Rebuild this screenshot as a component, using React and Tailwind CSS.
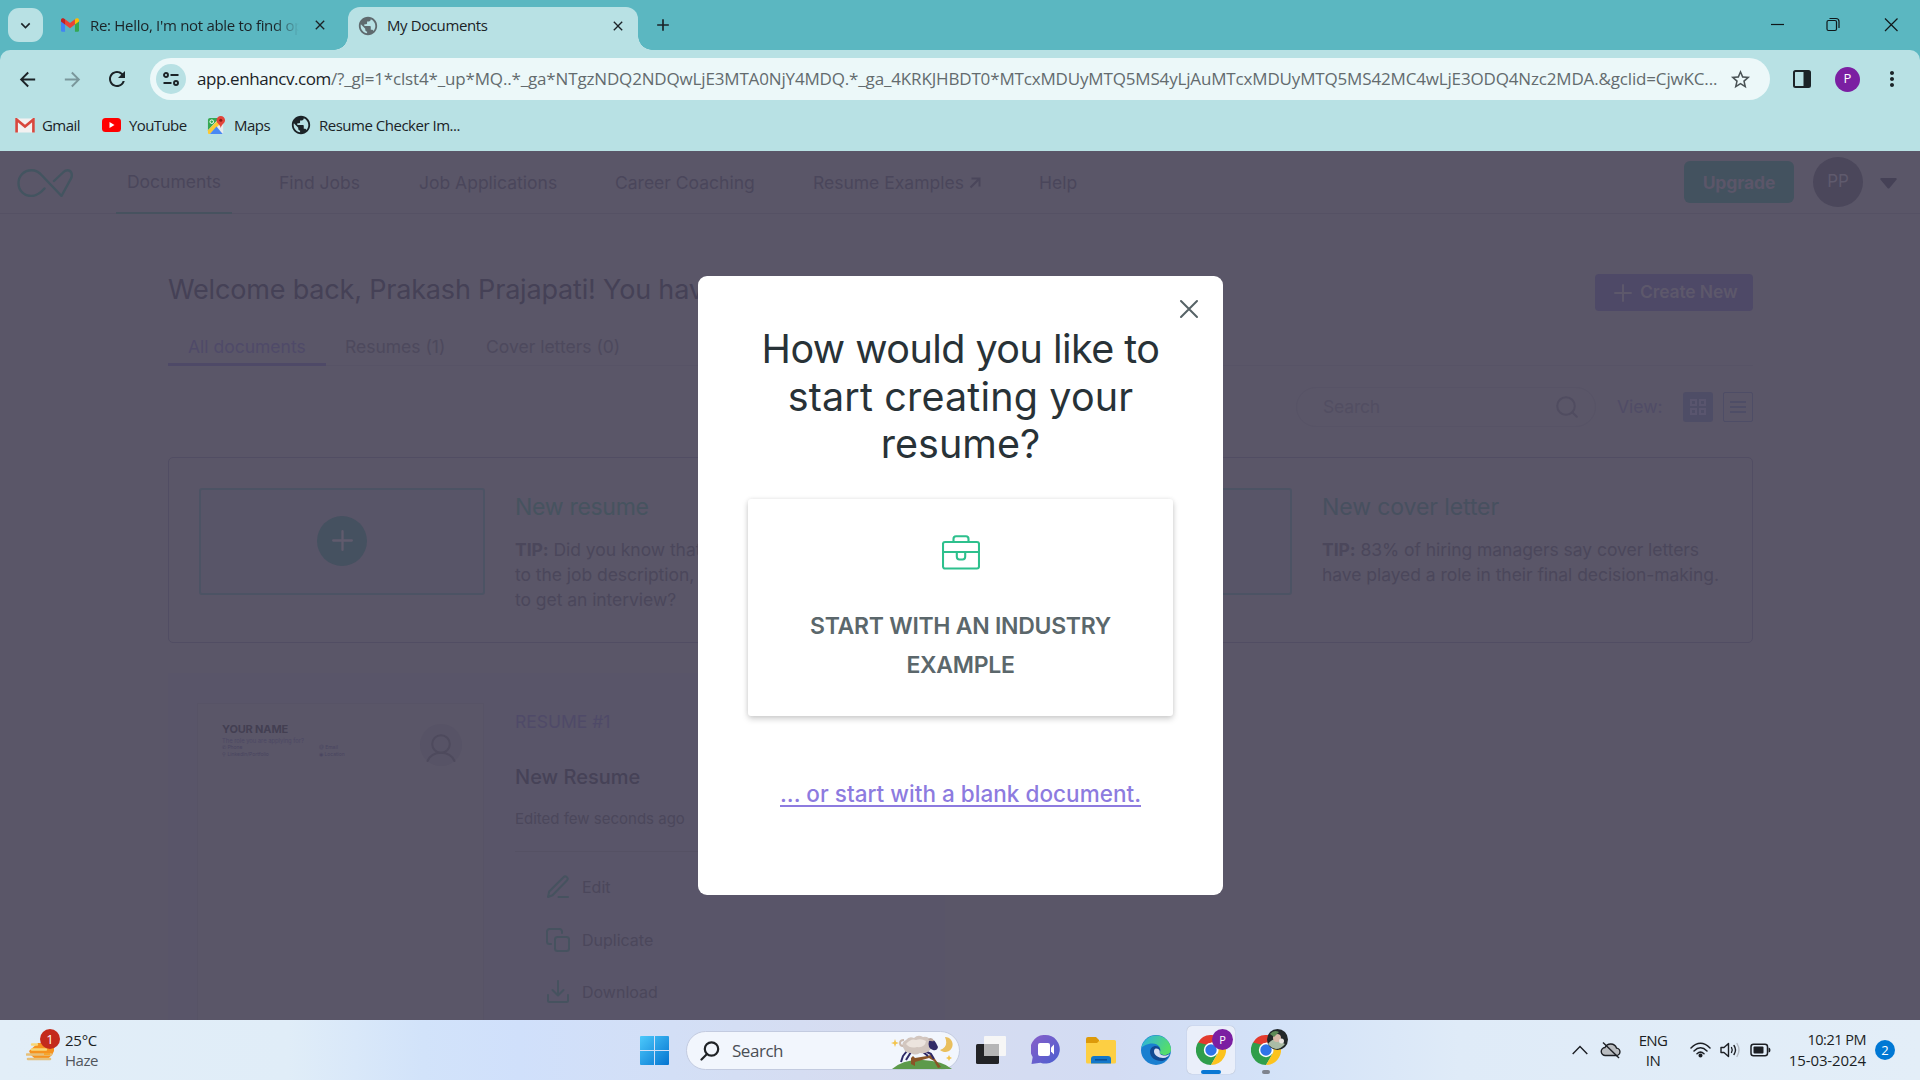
import React from 'react';
import { MdPublic, MdArrowBack, MdArrowForward, MdRefresh, MdStarBorder, MdMoreVert, MdClose, MdAdd, MdExpandMore } from 'react-icons/md';

const GmailIcon = ({ muted, className }) => (
  <svg viewBox="0 0 20 15" className={className}>
    {muted ? (
      <>
        <rect x="1" y="0.5" width="18" height="14" rx="1" fill="#f3f1f1" />
        <path d="M1.6 14.5V1.5L10 8.6l8.4-7.1v13" fill="none" stroke="#d9473d" strokeWidth="2.6" />
      </>
    ) : (
      <>
        <path d="M0 2.5V13.5A1.5 1.5 0 0 0 1.5 15H4.5V5z" fill="#4285f4" />
        <path d="M15.5 15h3a1.5 1.5 0 0 0 1.5-1.5V2.5L15.5 5z" fill="#34a853" />
        <path d="M15.5 1.2V7L20 3.6V2c0-2-2.2-2.6-3.6-1.5z" fill="#fbbc04" />
        <path d="M4.5 7V1.2L10 5.4l5.5-4.2V7L10 11.200z" fill="#ea4335" />
        <path d="M0 2v1.600L4.500 7V1.200L3.600.5C2.200-.6 0 0 0 2z" fill="#c5221f" />
      </>
    )}
  </svg>
);

const MapsIcon = () => (
  <svg viewBox="0 0 20 20" className="h-[19px] w-[19px]">
    <rect x="1" y="2" width="16" height="17" rx="2" fill="#e8eaed" />
    <path d="M1 4a2 2 0 0 1 2-2h10L1 15z" fill="#34a853" />
    <path d="M1 15L12 4l3 3L3 19H2a1 1 0 0 1-1-1z" fill="#fbc934" />
    <path d="M3 19l7-8 6.500 8z" fill="#4a89f3" />
    <circle cx="5" cy="6" r="1.900" fill="none" stroke="#fff" strokeWidth="1" />
    <path d="M14.500 0a4.500 4.500 0 0 0-4.500 4.500c0 3.200 3.500 4 4.500 8 1-4 4.500-4.800 4.500-8A4.500 4.500 0 0 0 14.500 0z" fill="#e2453a" />
    <circle cx="14.500" cy="4.500" r="1.600" fill="#8c1d16" />
  </svg>
);

const Logo = () => (
  <svg viewBox="0 0 56 28" className="h-[28px] w-[56px]" fill="none" stroke="#435460" strokeWidth="2.400" strokeLinejoin="round" strokeLinecap="round">
    <path d="M27.500 19.500C23 24.500 19.500 27 14.500 27 7 27 1.500 21.500 1.500 14.200S7 1.300 14.500 1.300c5 0 8 2.200 10.500 5.200L44.500 27 54 9.500C56 5 54 1.300 50.500 1.300c-2 0-3.500 1-5 2.700L37 12" />
  </svg>
);

const ChromeIcon = () => (
  <svg viewBox="0 0 30 30" className="h-[30px] w-[30px]">
    <path d="M15 15L2 7.500A15 15 0 0 1 28 7.500H15z" fill="#e33b2e" />
    <path d="M2 7.500A15 15 0 0 0 15 30l6.500-11.200L15 15z" fill="#2f9e4b" />
    <path d="M28 7.500A15 15 0 0 1 15 30l6.500-11.200A7.500 7.500 0 0 0 15 7.500z" fill="#fcc31e" />
    <path d="M2 7.500l6.500 11.300L12 10z" fill="#2f9e4b" />
    <circle cx="15" cy="15" r="7.200" fill="#fff" />
    <circle cx="15" cy="15" r="5.700" fill="#2f74e8" />
  </svg>
);

function TabStrip() {
  return (
    <div className="flex h-[50px] bg-[#5bb7c1] pl-2 text-[15px] text-[#1b2327]">
      <div className="mt-2 flex h-[34px] w-[35px] items-center justify-center rounded-[11px] bg-[#b8e1e4]">
        <MdExpandMore className="h-[19px] w-[19px]" />
      </div>
      <div className="flex w-[305px] items-center pl-[18px]">
        <GmailIcon className="h-[14px] w-[18px]" />
        <div className="ml-[11px] w-[209px] overflow-hidden whitespace-nowrap tracking-[-0.3px] [mask-image:linear-gradient(90deg,#000_88%,transparent)]">Re: Hello, I'm not able to find op</div>
        <MdClose className="ml-[13px] h-[16px] w-[16px]" />
      </div>
      <div className="relative mt-[7px] flex h-[43px] w-[290px] items-center rounded-t-[12px] bg-[#b8e1e4] pb-[6px]">
        <div className="absolute bottom-0 left-[-14px] h-[14px] w-[14px] bg-[radial-gradient(circle_at_0_0,transparent_13.5px,#b8e1e4_14px)]" />
        <div className="absolute right-[-14px] bottom-0 h-[14px] w-[14px] bg-[radial-gradient(circle_at_100%_0,transparent_13.5px,#b8e1e4_14px)]" />
        <MdPublic className="ml-[9px] h-[22px] w-[22px] text-[#5f6a6e]" />
        <span className="ml-[8px] w-[223px] tracking-[-0.4px]">My Documents</span>
        <MdClose className="h-[16px] w-[16px]" />
      </div>
      <MdAdd className="mt-[15px] ml-[15px] h-[20px] w-[20px]" />
      <svg viewBox="0 0 132 18" className="mt-[16px] mr-[22px] ml-auto h-[18px] w-[132px]" fill="none" stroke="#10181a" strokeWidth="1.200">
        <path d="M5 8.500h13" />
        <rect x="61" y="4.500" width="9.500" height="10" rx="1.500" />
        <path d="M63.500 2.500h6.500q3 0 3 3v6.500" />
        <path d="M119 2.500l12.500 12.500M131.500 2.500L119 15" />
      </svg>
    </div>
  );
}

function Toolbar() {
  return (
    <div className="bg-[#5bb7c1]">
      <div className="flex h-[58px] items-center rounded-t-[10px] bg-[#b8e1e4] pl-[16px] text-[#1b2327]">
        <MdArrowBack className="h-[23px] w-[23px]" />
        <MdArrowForward className="ml-[22px] h-[23px] w-[23px] text-[#7a979b]" />
        <MdRefresh className="ml-[21px] h-[24px] w-[24px]" />
        <div className="ml-[21px] flex h-[42px] w-[1620px] items-center rounded-full bg-[#ecf8f9] pl-[6px]">
          <div className="flex h-[30px] w-[30px] items-center justify-center rounded-full bg-[#b8e1e4]">
            <svg viewBox="0 0 16 14" className="h-[14px] w-[16px]" fill="none" stroke="#1b2327" strokeWidth="1.900">
              <circle cx="3" cy="3" r="2" /><path d="M7.500 3H15.500M.5 11H8.500" /><circle cx="13" cy="11" r="2" />
            </svg>
          </div>
          <div className="ml-[11px] w-[1532px] text-[17px] whitespace-nowrap">
            <span className="tracking-[-0.42px]">app.enhancv.com</span>
            <span className="tracking-[-0.16px] text-[#636b6e]">/?_gl=1*clst4*_up*MQ..*_ga*NTgzNDQ2NDQwLjE3MTA0NjY4MDQ.*_ga_4KRKJHBDT0*MTcxMDUyMTQ5MS4yLjAuMTcxMDUyMTQ5MS42MC4wLjE3ODQ4Nzc2MDA.&amp;gclid=CjwKC...</span>
          </div>
          <MdStarBorder className="h-[23px] w-[23px] text-[#4a5356]" />
        </div>
        <svg viewBox="0 0 18 18" className="ml-[23px] h-[18px] w-[18px]">
          <rect x="1" y="1" width="16" height="16" rx="1.500" fill="none" stroke="#1b2327" strokeWidth="2" />
          <path d="M10.500 1H17V17H10.500z" fill="#1b2327" />
        </svg>
        <div className="ml-[24px] flex h-[25px] w-[25px] items-center justify-center rounded-full bg-[#7b1fa2] text-[13px] text-white">P</div>
        <MdMoreVert className="ml-[20px] h-[24px] w-[24px]" />
      </div>
    </div>
  );
}

function Bookmarks() {
  return (
    <div className="flex h-[43px] items-start bg-[#b8e1e4] pl-[15px] text-[15px] leading-[20px] whitespace-nowrap text-[#1b2327]">
      <div className="mt-[7px] flex h-[20px] items-center">
        <GmailIcon muted className="h-[15px] w-[20px]" />
        <span className="ml-[7px] w-[60px] tracking-[-0.54px]">Gmail</span>
        <svg viewBox="0 0 19 14" className="h-[14px] w-[19px]"><rect width="19" height="14" rx="3.500" fill="#f00" /><path d="M7.500 4v6l5-3z" fill="#fff" /></svg>
        <span className="ml-[8px] w-[78px] tracking-[-0.6px]">YouTube</span>
        <MapsIcon />
        <span className="ml-[8px] w-[56px] tracking-[-0.54px]">Maps</span>
        <MdPublic className="h-[22px] w-[22px]" />
        <span className="ml-[7px] tracking-[-0.49px]">Resume Checker Im...</span>
      </div>
    </div>
  );
}

function NavBar() {
  return (
    <div className="flex h-[63px] border-b border-[#555164] pl-[17px] text-[17.5px] whitespace-nowrap text-[#4a465b]">
      <div className="mt-[18px]"><Logo /></div>
      <div className="ml-[43px] flex h-[63px] w-[116px] justify-center border-b-2 border-[#47525f] pt-[18px] leading-[26px]">Documents</div>
      <div className="flex h-[63px] pt-[19px] leading-[26px]">
        <span className="ml-[47px] w-[140px]">Find Jobs</span>
        <span className="w-[196px]">Job Applications</span>
        <span className="w-[198px]">Career Coaching</span>
        <span className="w-[156px]">Resume Examples</span>
        <svg viewBox="0 0 12 12" className="mt-[7px] h-[12px] w-[12px]" fill="none" stroke="#4a465b" strokeWidth="2"><path d="M1.500 10.500L10 2M2.500 1.500H10.500V9.500" /></svg>
        <span className="ml-[58px]">Help</span>
      </div>
      <div className="mt-[10px] ml-auto flex h-[42px] w-[110px] items-center justify-center rounded-[6px] bg-[#43525f] pt-[2px] text-[17.5px] font-bold tracking-[-0.1px] text-[#5b5669]">Upgrade</div>
      <div className="mt-[6px] ml-[19px] flex h-[50px] w-[50px] items-center justify-center rounded-full bg-[#4b475b] text-[17px] text-[#5f5a6d]">PP</div>
      <svg viewBox="0 0 17 11" className="mt-[27px] mr-[23px] ml-[17px] h-[11px] w-[17px]" fill="#454156"><path d="M1.500 0h14q2 .3.700 2L9.500 10q-1 1.200-2 0L.8 2Q-.5.300 1.500 0z" /></svg>
    </div>
  );
}

const Plus = ({ className }) => (
  <svg viewBox="0 0 18 18" className={className} fill="none" stroke="currentColor" strokeWidth="2" strokeLinecap="round"><path d="M9 1V17M1 9H17" /></svg>
);

function NewCard({ title, titleClass, children }) {
  return (
    <div className="flex">
      <div className="mt-[30px] flex h-[107px] w-[286px] items-center justify-center rounded-[3px] border-2 border-[#4c5364] bg-[#585568] pb-[2px]">
        <div className="flex h-[50px] w-[50px] items-center justify-center rounded-full bg-[#455160] text-[#605b6d]"><Plus className="h-[21px] w-[21px]" /></div>
      </div>
      <div className="mt-[34px] ml-[30px] text-[17.5px] leading-[25px] tracking-[-0.05px] whitespace-nowrap">
        <div className={titleClass}>{title}</div>
        <div className="mt-[15px] text-[#4b475b]">{children}</div>
      </div>
    </div>
  );
}

function Welcome() {
  return (
    <div className="ml-[168px] w-[1585px]">
      <div className="flex justify-between pt-[60px]">
        <h1 className="-mt-[2px] text-[27px] leading-[36px] tracking-[-0.18px] text-[#454156]">Welcome back, Prakash Prajapati! You have 1 document</h1>
        <div className="flex h-[37px] w-[158px] items-center rounded-[4px] bg-[#4e4967] pl-[19px] text-[17.5px] font-semibold tracking-[-0.14px] text-[#5d586b]">
          <Plus className="mr-[8px] h-[18px] w-[18px]" />Create New
        </div>
      </div>
      <div className="mt-[20px] flex h-[35px] border-b border-[#575366] pt-[3px] text-[17.5px] leading-[26px] text-[#4d495d]">
        <div className="h-[32px] w-[158px] border-b-[3px] border-[#4e4967] pl-[20px] text-[#4f4a68]">All documents</div>
        <span className="ml-[19px] w-[141px]">Resumes (1)</span>
        <span>Cover letters (0)</span>
      </div>
      <div className="mt-[21px] flex items-center justify-end text-[17.5px] text-[#524e62]">
        <div className="flex h-[40px] w-[300px] items-center justify-between rounded-full border border-[#575366] pr-[17px] pl-[26px]">
          <span className="tracking-[-0.18px]">Search</span>
          <svg viewBox="0 0 22 22" className="h-[22px] w-[22px]" fill="none" stroke="#504c60" strokeWidth="2" strokeLinecap="round"><circle cx="10" cy="10" r="8.800" /><path d="M16.500 16.500l4.300 4.300" /></svg>
        </div>
        <span className="ml-[21px] w-[66px] text-[#504c66]">View:</span>
        <div className="flex h-[30px] w-[30px] items-center justify-center rounded-[3px] bg-[#4e4d66]">
          <svg viewBox="0 0 18 18" className="h-[18px] w-[18px]" fill="none" stroke="#59556e" strokeWidth="2"><rect x="2" y="2" width="5" height="5" /><rect x="11" y="2" width="5" height="5" /><rect x="2" y="11" width="5" height="5" /><rect x="11" y="11" width="5" height="5" /></svg>
        </div>
        <div className="ml-[10px] flex h-[30px] w-[30px] items-center justify-center rounded-[2px] border border-[#4e4d66]">
          <svg viewBox="0 0 16 12" className="h-[12px] w-[16px]" stroke="#4e4d66" strokeWidth="2"><path d="M0 1H16M0 6H16M0 11H16" /></svg>
        </div>
      </div>
      <div className="mt-[30px] grid h-[186px] grid-cols-[807px_1fr] rounded-[5px] border border-[#514d63] pl-[30px]">
        <NewCard title="New resume" titleClass="text-[23px] leading-[30px] tracking-[-0.3px] text-[#46535f]">
          <b>TIP:</b> Did you know that tailoring your resume<br />to the job description, doubles your chances<br />to get an interview?
        </NewCard>
        <NewCard title="New cover letter" titleClass="text-[23px] leading-[30px] tracking-[-0.09px] text-[#47505f]">
          <b>TIP:</b> 83% of hiring managers say cover letters<br />have played a role in their final decision-making.
        </NewCard>
      </div>
    </div>
  );
}

const stroke = { fill: 'none', stroke: '#46525f', strokeWidth: 2, strokeLinecap: 'round', strokeLinejoin: 'round' };
const PencilIcon = () => <svg viewBox="0 0 24 24" className="h-[24px] w-[24px]" {...stroke}><path d="M2 22l1.200-5.500L17.500 2.200a2.300 2.300 0 0 1 3.400 3.300L6.500 20.200z M12.500 22H22" /></svg>;
const CopyIcon = () => <svg viewBox="0 0 24 24" className="h-[24px] w-[24px]" {...stroke}><rect x="9" y="9" width="14" height="14" rx="2.500" /><path d="M5 16H3.500A2.500 2.500 0 0 1 1 13.500V3.500A2.500 2.500 0 0 1 3.500 1H13.500A2.500 2.500 0 0 1 16 3.500V5" /></svg>;
const DownloadIcon = () => <svg viewBox="0 0 24 24" className="h-[24px] w-[24px]" {...stroke}><path d="M2 15v5.500A1.500 1.500 0 0 0 3.500 22h17a1.500 1.500 0 0 0 1.500-1.500V15M12 1V15M6.500 10l5.500 5.500L17.500 10" /></svg>;

function ResumeCard() {
  return (
    <div className="mt-[30px] ml-[168px] flex h-[350px] w-[777px] overflow-hidden bg-[#595569] pl-[29px]">
      <div className="mt-[30px] h-[330px] w-[287px] border border-[#575366] bg-[#5a5668] pt-[15px] pl-[24px] text-[#4c4864]">
        <div className="flex">
          <div className="w-[198px] text-[5px] leading-[7px] whitespace-nowrap">
            <div className="text-[11px] leading-[20px] font-bold tracking-[-0.16px] text-[#433f52]">YOUR NAME</div>
            <div className="mt-[-3px] text-[5.800px] leading-[9px]">The role you are applying for?</div>
            <div className="mt-[-1px] grid grid-cols-[97px_1fr] text-[#494560]">
              <span>✆ Phone</span><span>@ Email</span>
              <span>⚲ LinkedIn/Portfolio</span><span>◉ Location</span>
            </div>
          </div>
          <svg viewBox="0 0 42 42" className="mt-[5px] h-[42px] w-[42px]" fill="none" stroke="#4e4a5d" strokeWidth="2"><circle cx="21" cy="21" r="21" fill="#575366" stroke="none" /><circle cx="21" cy="20" r="8.800" /><path d="M7.500 37C10 31.500 15 28.800 21 28.800S32 31.500 34.500 37" strokeLinecap="round" /></svg>
        </div>
      </div>
      <div className="ml-[31px] w-[400px] pt-[36px] text-[#4b475b]">
        <div className="text-[17.5px] leading-[26px] text-[#4f4a68]">RESUME #1</div>
        <div className="mt-[27px] text-[20px] leading-[30px] font-medium text-[#464257]">New Resume</div>
        <div className="mt-[16px] text-[15px] leading-[22px]">Edited few seconds ago</div>
        <div className="mt-[21px] border-t border-[#555164] pl-[31px] text-[16px]">
          <div className="mt-[22px] flex h-[26px] items-center gap-[12px]"><PencilIcon />Edit</div>
          <div className="mt-[27px] flex h-[26px] items-center gap-[12px]"><CopyIcon />Duplicate</div>
          <div className="mt-[26px] flex h-[26px] items-center gap-[12px]"><DownloadIcon />Download</div>
        </div>
      </div>
    </div>
  );
}

function Modal() {
  return (
    <div className="absolute top-[125px] left-[698px] flex h-[619px] w-[525px] flex-col items-center rounded-[9px] bg-white whitespace-nowrap">
      <svg viewBox="0 0 20 20" className="absolute top-[23px] right-[24px] h-[20px] w-[20px]" stroke="#566266" strokeWidth="2" strokeLinecap="round"><path d="M2 2L18 18M18 2L2 18" /></svg>
      <h2 className="mt-[50px] text-center text-[39.5px] leading-[47.5px] text-[#283237]">
        <span className="tracking-[-0.54px]">How would you like to</span><br />
        <span className="tracking-[0.16px]">start creating your</span><br />
        <span className="tracking-[0px]">resume?</span>
      </h2>
      <div className="mt-[30px] flex h-[217px] w-[425px] flex-col items-center rounded-[3px] bg-white shadow-[0_3px_6px_rgba(0,0,0,0.18),0_0_4px_rgba(0,0,0,0.08)]">
        <svg viewBox="0 0 38 36" className="mt-[36px] h-[36px] w-[38px]" fill="none" stroke="#2dc08d" strokeWidth="2.100" strokeLinejoin="round"><rect x="1" y="7" width="36" height="26.500" rx="2" /><path d="M1 17H37M11.500 7V4Q11.500 1.300 14 1.300H24Q26.500 1.300 26.500 4V7M14.800 17V21.500Q14.800 24.500 17.500 24.500H20.500Q23.200 24.500 23.200 21.500V17" /></svg>
        <div className="mt-[36px] text-center text-[23px] leading-[39px] font-semibold tracking-[-0.28px] text-[#5b676b]">START WITH AN INDUSTRY<br />EXAMPLE</div>
      </div>
      <div className="mt-[62px] text-[22.5px] leading-[32px] font-medium tracking-[0.03px] text-[#8d7bdf] underline decoration-2 underline-offset-[3px]">... or start with a blank document.</div>
    </div>
  );
}

const Sheep = () => (
  <svg viewBox="0 0 62 34" className="h-[34px] w-[62px]">
    <path d="M1 34Q12 24 32 25T61 34z" fill="#5d9a4a" />
    <path d="M20 29v-6l2-2 2 2 12-2 4-1 4 4 6 8-3 1-4-7-5-3-14 4v4z" fill="#8a5427" />
    <path d="M16 16l-4 5-2 6M20 17l-5 8M34 16l6 3 3 5M32 17l5 4" stroke="#2f2a66" strokeWidth="2" fill="none" strokeLinejoin="round" />
    <path d="M13 14q-4-6 2-9 3-4 8-2 4-4 9-1 6-1 7 4 4 5 0 9-4 4-10 3-5 3-9 0-6 0-7-4z" fill="#d2c6bf" />
    <path d="M15 9q5-6 10-4 5-2 10 1-1 7-9 6-7 2-11-3z" fill="#ece4de" />
    <path d="M38 6q5-3 7 2l2 4q-1 4-5 3-6-2-4-9z" fill="#302b68" />
    <path d="M37 4q4-3 6 2-4 1-6-2z" fill="#b9a59d" />
    <path d="M13 5q-4 0-4 3t3 3" stroke="#cbbab0" strokeWidth="2" fill="none" />
    <path d="M54 2a7.500 7.500 0 1 1-5 13q9-3 5-13z" fill="#e9bf5d" />
    <path d="M4 4l1 3 3 1-3 1-1 3-1-3-3-1 3-1zM58 20l1 2 2 1-2 1-1 2-1-2-2-1 2-1z" fill="#f3c44c" />
  </svg>
);

function Taskbar() {
  return (
    <div className="flex h-[60px] bg-[linear-gradient(90deg,#e2eef8_0%,#e0edf8_15%,#d2e3fa_22%,#d0e0fb_27%,#d3dff6_35%,#d6dcf0_45%,#d3dcf3_58%,#d3e2f8_66%,#dfebf8_76%,#e3eef8_100%)] text-[15px] leading-[20px] text-[#1c1f24]">
      <div className="flex w-[640px] pt-[9px] pl-[26px]">
        <div className="relative h-[36px] w-[36px]">
          <svg viewBox="0 0 36 36" className="h-[36px] w-[36px]">
            <path d="M3 22a13 12.500 0 0 0 25 0V14H12z" fill="#f6931f" />
            <path d="M6 15.500h5M6 20.500h14" stroke="#f8d777" strokeWidth="2.400" strokeLinecap="round" />
            <path d="M1 25.500h24M2 30h22" stroke="#e6c07a" strokeWidth="2.600" strokeLinecap="round" />
            <path d="M18 25h6" stroke="#f6a52d" strokeWidth="2" />
          </svg>
          <div className="absolute top-0 left-[14px] flex h-[20px] w-[20px] items-center justify-center rounded-full bg-[#c42b1c] text-[13px] text-white">1</div>
        </div>
        <div className="ml-[3px] pt-[1px]"><div className="tracking-[-0.26px]">25°C</div><div className="tracking-[-0.46px] text-[#51565d]">Haze</div></div>
      </div>
      <svg viewBox="0 0 29 29" className="mt-[16px] h-[29px] w-[29px]"><defs><linearGradient id="win" x1="0" y1="0" x2="1" y2="1"><stop offset="0" stopColor="#4cc9fb" /><stop offset="1" stopColor="#0474d0" /></linearGradient></defs><path d="M0 1a1 1 0 0 1 1-1H14V14H0zM15 0H28a1 1 0 0 1 1 1V14H15zM0 15H14V29H1a1 1 0 0 1-1-1zM15 15H29V28a1 1 0 0 1-1 1H15z" fill="url(#win)" /></svg>
      <div className="mt-[11px] ml-[17px] flex h-[39px] w-[274px] items-center rounded-full border border-[#c3cbe0] bg-[#f2f6fd] pl-[13px]">
        <svg viewBox="0 0 20 20" className="h-[20px] w-[20px]" fill="none" stroke="#1f2226" strokeWidth="2.200" strokeLinecap="round"><circle cx="11.500" cy="8" r="6.700" /><path d="M7 13L1.500 18.500" /></svg>
        <span className="ml-[12px] w-[159px] text-[17px] tracking-[-0.47px] text-[#4a4e55]">Search</span>
        <div className="mt-[3px]"><Sheep /></div>
      </div>
      <svg viewBox="0 0 30 28" className="mt-[16px] ml-[16px] h-[28px] w-[30px]"><rect y="8" width="23" height="20" rx="1.500" fill="#222326" /><rect x="8" y="0" width="22" height="20" rx="1" fill="#f6f6f6" /><rect x="8" y="8" width="15" height="12" fill="#b5b5b6" /></svg>
      <svg viewBox="0 0 29 29" className="mt-[15px] ml-[25px] h-[29px] w-[29px]"><defs><linearGradient id="chat" x1="0" y1="0" x2="1" y2="1"><stop offset="0" stopColor="#8a5fc9" /><stop offset="1" stopColor="#4a5fd0" /></linearGradient></defs><path d="M14.500 0a14.300 14.300 0 1 1-5 27.700L.5 29l1.200-7A14.300 14.300 0 0 1 14.500 0z" fill="url(#chat)" /><rect x="7" y="8" width="12" height="13" rx="2" fill="#fff" /><path d="M20 12.500l3-3v10l-3-3z" fill="#fff" /></svg>
      <svg viewBox="0 0 30 28" className="mt-[16px] ml-[26px] h-[28px] w-[30px]"><path d="M0 3a2 2 0 0 1 2-2h8l3 3v5H0z" fill="#dd9a0a" /><path d="M0 7h11l3-3H28.500A1.500 1.500 0 0 1 30 5.500V26a1.500 1.500 0 0 1-1.500 1.500h-27A1.500 1.500 0 0 1 0 26z" fill="#fdcf43" /><path d="M5 27.500V23q0-3 3-3H22q3 0 3 3v4.500z" fill="#1378ca" /><path d="M9 23.800H21" stroke="#0a4f95" strokeWidth="1.500" /></svg>
      <svg viewBox="0 0 30 30" className="mt-[15px] ml-[25px] h-[30px] w-[30px]">
        <defs><linearGradient id="edgeTop" x1="0" y1="0" x2="1" y2="0.400"><stop offset="0" stopColor="#2bb0e6" /><stop offset="1" stopColor="#55dd6c" /></linearGradient></defs>
        <circle cx="15" cy="15" r="15" fill="#1a7fd0" />
        <path d="M.3 13A15 15 0 0 1 30 14c0 4-3 6-6.500 6-3 0-5.500-1.200-4.500-3C20.500 13 17.500 8.500 11.500 8.500 6 8.500 2 11 .3 13z" fill="url(#edgeTop)" />
        <path d="M9 17c0-4 3-6 5.500-6 4 0 5.500 3.500 4.500 6-1 1.800 1.500 3 4.500 3 2 0 4-.5 5.200-2C27 23.500 24 26 20 26c-6 0-11-4-11-9z" fill="#124a93" />
        <path d="M15 13.500c2.500 0 4 1.700 3.800 3.500-.6 2 1.700 3.500 5 3.500 2 0 3.800-.6 4.800-1.800-.8 2.300-3 4.300-6.600 4.300-5 0-9-3-9-6.500 0-1.500.5-3 2-3z" fill="#d7def3" />
      </svg>
      <div className="relative mt-[6px] ml-[16px] flex h-[48px] w-[48px] justify-center rounded-[5px] bg-[#eaeffa] pt-[9px] shadow-[0_0_1px_rgba(0,0,0,0.3)]">
        <ChromeIcon />
        <div className="absolute top-[3px] left-[25px] flex h-[21px] w-[21px] items-center justify-center rounded-full bg-[#7b1fa2] text-[11px] text-white">P</div>
        <div className="absolute bottom-0 left-[14px] h-[4px] w-[20px] rounded-full bg-[#0a78d4]" />
      </div>
      <div className="relative mt-[6px] ml-[7px] flex h-[48px] w-[48px] justify-center pt-[9px]">
        <ChromeIcon />
        <svg viewBox="0 0 21 21" className="absolute top-[3px] left-[25px] h-[21px] w-[21px]"><circle cx="10.500" cy="10.500" r="10.500" fill="#22282a" /><path d="M1 15Q6 8 12 12l6 3Q14 20 9 20 4 19 1 15z" fill="#aabca6" /><circle cx="10" cy="9" r="4" fill="#d9b9a8" /><path d="M3 5q4-5 9-2L7 8z" fill="#5d8a55" /><circle cx="14.500" cy="12" r="2.500" fill="#e8e4e2" /></svg>
        <div className="absolute bottom-0 left-[20px] h-[4px] w-[8px] rounded-full bg-[#7e838e]" />
      </div>
      <div className="mr-[25px] ml-auto flex items-center">
        <svg viewBox="0 0 16 10" className="mr-[12px] h-[10px] w-[16px]" fill="none" stroke="#1c1f24" strokeWidth="1.400"><path d="M.7 9L8 1.500 15.300 9" /></svg>
        <svg viewBox="0 0 21 18" className="h-[18px] w-[21px]" fill="none" stroke="#1c1f24" strokeWidth="1.400"><path d="M5.500 14.500H16a3.700 3.700 0 0 0 .5-7.400A6.300 6.300 0 0 0 5 6.500a4 4 0 0 0 .5 8z" fill="#b9bcc0" /><path d="M3 1.500L19 17" /></svg>
        <div className="ml-[17px] w-[30px] text-center text-[15px] tracking-[-0.6px]">ENG<br />IN</div>
        <svg viewBox="0 0 21 16" className="ml-[22px] h-[16px] w-[21px]" fill="none" stroke="#1c1f24" strokeWidth="1.500" strokeLinecap="round"><path d="M1 6Q10.500-3.500 20 6M4 9Q10.500 2.500 17 9M7 11.800Q10.500 8.500 14 11.800" /><circle cx="10.500" cy="13.500" r="1.300" fill="#1c1f24" /></svg>
        <svg viewBox="0 0 21 18" className="ml-[9px] h-[18px] w-[21px]" fill="none" stroke="#1c1f24" strokeWidth="1.400" strokeLinejoin="round" strokeLinecap="round"><path d="M1 6.500H4L8.500 2.500V15.500L4 11.500H1z M11.500 6.500q1.500 2.500 0 5M14 4.500q3 4.500 0 9" /><path d="M17 2.500q4 6.500 0 13" stroke="#b3b9c2" /></svg>
        <svg viewBox="0 0 21 14" className="ml-[9px] h-[14px] w-[21px]"><rect x="1" y="1.200" width="16.500" height="11.500" rx="2.500" fill="none" stroke="#1c1f24" strokeWidth="1.500" /><rect x="3.500" y="3.500" width="10" height="7" rx="1" fill="#1c1f24" /><path d="M18.500 4.500q2 0 2 2.500t-2 2.500z" fill="#1c1f24" /></svg>
        <div className="ml-[14px] w-[81px] text-right tracking-[-0.1px]"><div className="text-[14.500px] tracking-[-0.500px]">10:21 PM</div>15-03-2024</div>
        <div className="ml-[9px] flex h-[20px] w-[20px] items-center justify-center rounded-full bg-[#0078d4] text-[13px] text-white">2</div>
      </div>
    </div>
  );
}

export default function App() {
  return (
    <div className="h-[1080px] w-[1920px] overflow-hidden font-['Open_Sans','Noto_Sans',sans-serif]">
      <TabStrip />
      <Toolbar />
      <Bookmarks />
      <main className="relative h-[869px] overflow-hidden bg-[#5a5668] font-['Inter',sans-serif]">
        <NavBar />
        <Welcome />
        <ResumeCard />
        <Modal />
      </main>
      <Taskbar />
    </div>
  );
}
